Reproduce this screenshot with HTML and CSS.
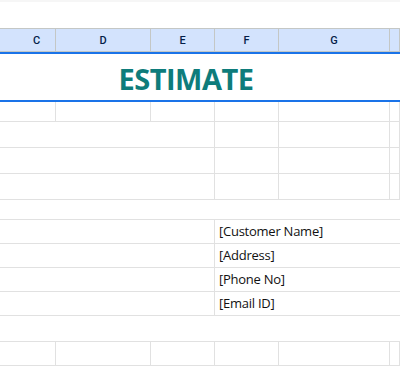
FILE: index.html
```html
<!DOCTYPE html>
<html lang="en">
<head>
    <meta charset="UTF-8">
    <meta name="viewport" content="width=device-width, initial-scale=1.0">
    <title>Estimate</title>
    <link rel="stylesheet" href="styles.css">
</head>
<body>
    <div class="top-strip"></div>

    <div class="col-heads">
        <div class="col-head">C</div>
        <div class="col-head">D</div>
        <div class="col-head">E</div>
        <div class="col-head">F</div>
        <div class="col-head">G</div>
        <div class="col-head"></div>
    </div>

    <div class="title-row">
        <div class="title">ESTIMATE</div>
    </div>

    <div class="sheet">
        <!-- row a -->
        <div class="cell"></div>
        <div class="cell"></div>
        <div class="cell"></div>
        <div class="cell"></div>
        <div class="cell"></div>
        <div class="cell"></div>

        <!-- rows b-d -->
        <div class="cell span-3"></div>
        <div class="cell"></div>
        <div class="cell"></div>
        <div class="cell"></div>
        <div class="cell span-3"></div>
        <div class="cell"></div>
        <div class="cell"></div>
        <div class="cell"></div>
        <div class="cell span-3"></div>
        <div class="cell"></div>
        <div class="cell"></div>
        <div class="cell"></div>

        <!-- spacer -->
        <div class="cell span-all"></div>

        <!-- customer block -->
        <div class="cell span-3"></div>
        <div class="cell span-3 text">[Customer Name]</div>
        <div class="cell span-3"></div>
        <div class="cell span-3 text">[Address]</div>
        <div class="cell span-3"></div>
        <div class="cell span-3 text">[Phone No]</div>
        <div class="cell span-3"></div>
        <div class="cell span-3 text">[Email ID]</div>

        <!-- spacer -->
        <div class="cell span-all"></div>

        <!-- last row -->
        <div class="cell"></div>
        <div class="cell"></div>
        <div class="cell"></div>
        <div class="cell"></div>
        <div class="cell"></div>
        <div class="cell"></div>
    </div>
</body>
</html>
```

FILE: styles.css
```css
body {
    margin: 0;
    background-color: #ffffff;
    font-family: "Open Sans", "Liberation Sans", sans-serif;
    overflow: hidden;
}
.top-strip {
    height: 26px;
    border-top: 2px solid #f6f6f6;
}
.col-heads,
.sheet {
    display: grid;
    grid-template-columns: 56px 95px 64px 64px 111px 1fr;
}
.col-heads {
    border-top: 1px solid #c4c7c5;
    background-color: #d3e3fd;
}
.col-head {
    height: 23px;
    box-sizing: border-box;
    border-right: 1px solid #c4c7c5;
    border-bottom: 1px solid #c4c7c5;
    font-family: Roboto, "Liberation Sans", sans-serif;
    font-size: 11px;
    font-weight: 500;
    color: #041e49;
    display: flex;
    justify-content: center;
    align-items: center;
    padding-left: 18px;
}
.col-head + .col-head {
    padding-left: 0;
}
.title-row {
    border-top: 2px solid #1a73e8;
    border-bottom: 2px solid #1a73e8;
    height: 46px;
    display: flex;
    justify-content: center;
    align-items: center;
}
.title {
    margin-left: -28px;
    margin-top: 2px;
    font-family: "Open Sans", "Liberation Sans", sans-serif;
    font-size: 29px;
    font-weight: 700;
    letter-spacing: -0.5px;
    color: #0e7c7b;
}
.sheet {
    grid-template-rows: 20px 26px 26px 26px 20px 24px 24px 24px 24px 26px 24px;
}
.cell {
    box-sizing: border-box;
    border-right: 1px solid #e1e1e1;
    border-bottom: 1px solid #e1e1e1;
}
.span-3 {
    grid-column: span 3;
}
.span-all {
    grid-column: 1 / -1;
    border-right: none;
}
.text {
    border-right: none;
    font-size: 13px;
    letter-spacing: -0.25px;
    color: #111111;
    padding: 1px 0 0 4px;
    line-height: 20px;
}
```
